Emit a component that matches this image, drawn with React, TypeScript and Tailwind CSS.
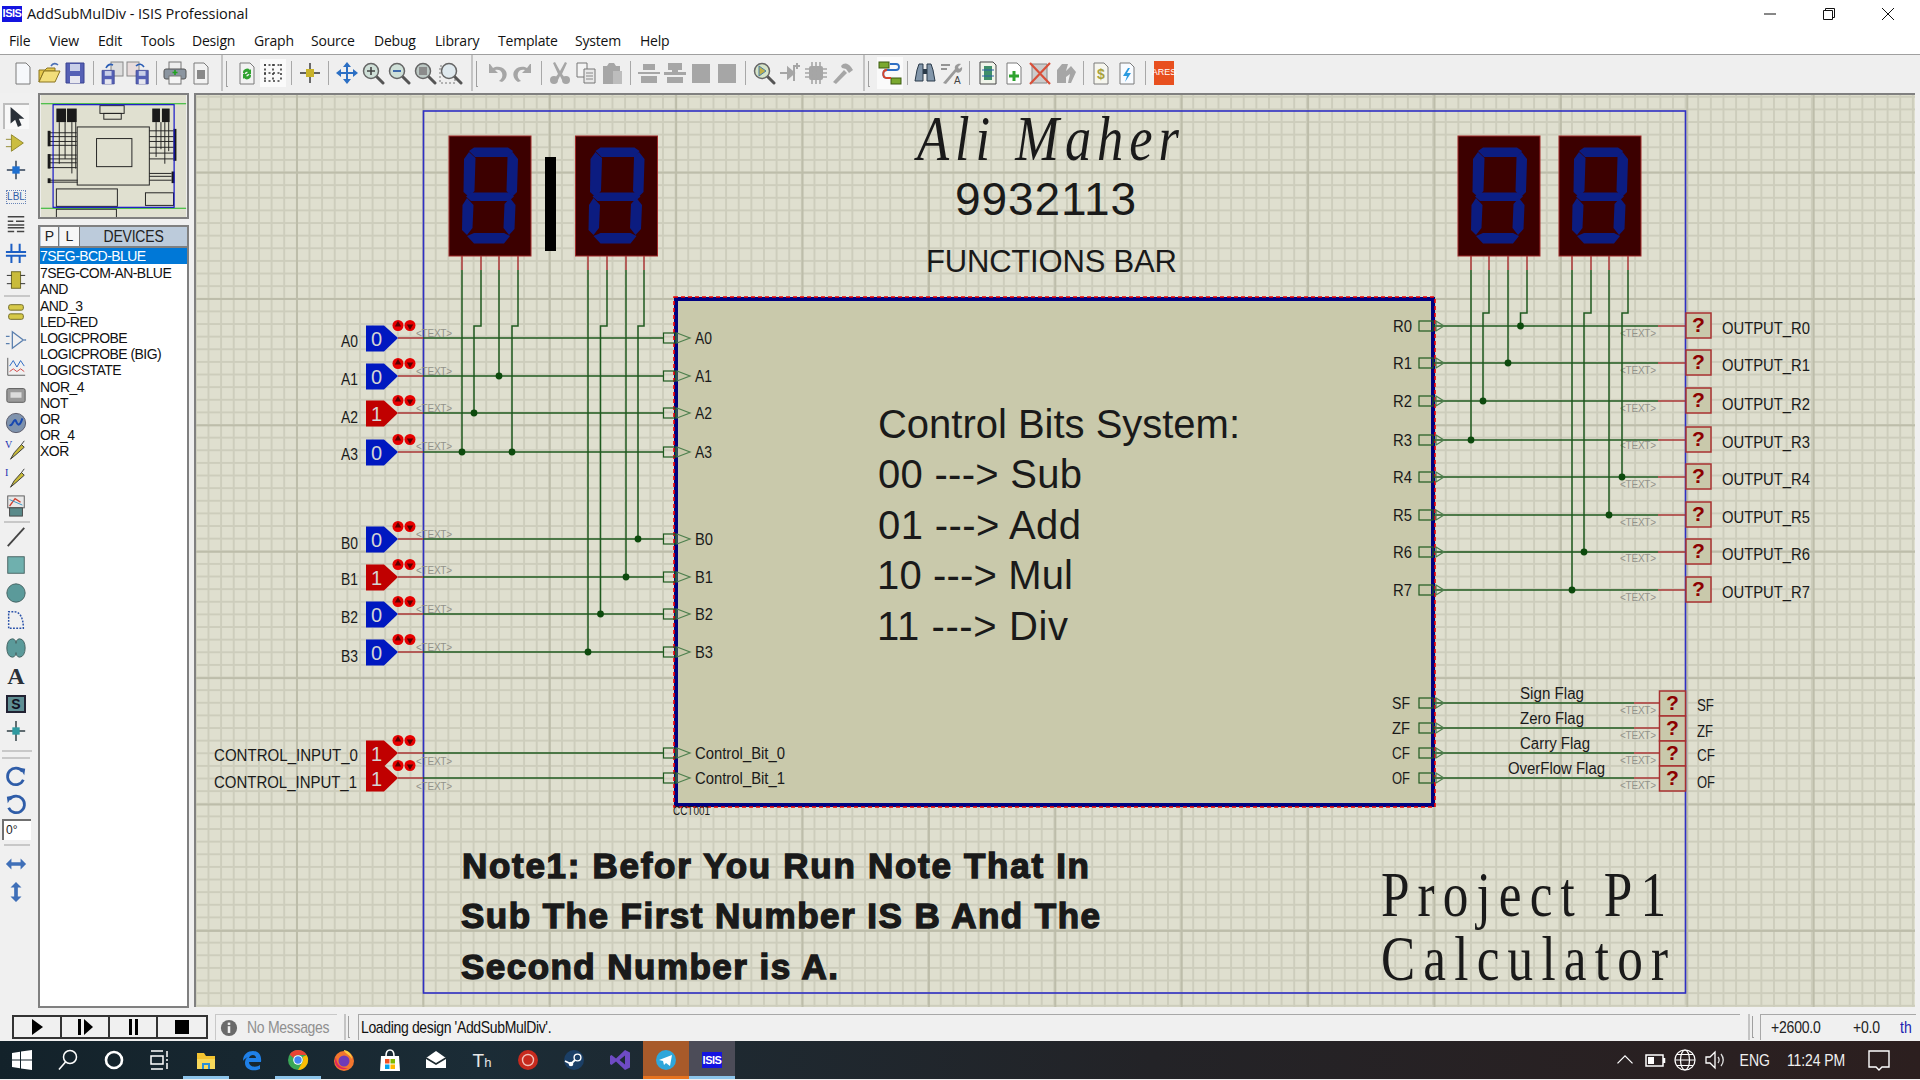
import React from 'react';

const sans = "'Liberation Sans', Arial, sans-serif";
const serif = "'Liberation Serif', 'Times New Roman', serif";
const WIRE = '#1f5a1f';
const STUB = '#a83434';

// ---------- schematic helpers ----------
type TP = { x: number; y: number; w?: number; s?: number; c?: string; f?: string; b?: boolean; i?: boolean; fit?: boolean; sw?: number; sx?: number; children: React.ReactNode };
const T = ({ x, y, w, s = 14, c = '#1a1a1a', f = sans, b, i, fit, sw, sx, children }: TP) => {
  const txt = (
    <text
      x={sx ? 0 : x} y={sx ? 0 : y} fontSize={s} fill={c} fontFamily={f}
      fontWeight={b ? 700 : 400} fontStyle={i ? 'italic' : 'normal'}
      textLength={w && sx ? w / sx : w} lengthAdjust={fit ? 'spacingAndGlyphs' : 'spacing'}
      stroke={sw ? c : undefined} strokeWidth={sw}
    >
      {children}
    </text>
  );
  // narrow glyphs, wide spacing: the big titles in the drawing are set like that
  return sx ? <g transform={`translate(${x} ${y}) scale(${sx} 1)`}>{txt}</g> : txt;
};

const Wire = ({ p, c = WIRE, w = 1.5 }: { p: string; c?: string; w?: number }) => (
  <polyline points={p} fill="none" stroke={c} strokeWidth={w} />
);
const Dot = ({ x, y }: { x: number; y: number }) => <circle cx={x} cy={y} r={3.4} fill="#0d4a0d" />;
const Tag = ({ x, y }: { x: number; y: number }) => (
  <T x={x} y={y + 3.5} w={36} s={10} c="#92928a">{'<TEXT>'}</T>
);

const Display = ({ x }: { x: number }) => (
  <g transform={`translate(${x} 136)`}>
    <rect x={0} y={0} width={82} height={120} fill="#3c0000" stroke="#a02828" strokeWidth={1} />
    <g fill="#0c1c80">
      <polygon points="20,15 25,11.500 59,11.500 64,15 60,21 26,21" />
      <polygon points="20,16 26.500,22 25.500,55 20,61 14.500,56 15,23" />
      <polygon points="63.500,16 69,23 68,56 63,61 57.500,55 58.500,21" />
      <polygon points="17,60.500 22,56.500 60,56.500 65,60.500 60,65 22,65" />
      <polygon points="18,62 24.500,69 23.500,92 18,99 13,94 13.500,69" />
      <polygon points="61,62 66.500,69 65.500,93 60,99 54.500,92 55.500,68" />
      <polygon points="18,100 25,97 55,97 61,100 55,107.500 25,107.500" />
    </g>
  </g>
);

const PinStub = ({ x }: { x: number }) => <Wire p={`${x},256 ${x},270`} c={STUB} />;

const State = ({ y, v }: { y: number; v: 0 | 1 }) => (
  <g>
    <polygon
      points={`366,${y - 12.5} 384,${y - 12.5} 398,${y} 384,${y + 13.5} 366,${y + 13.5}`}
      fill={v ? '#c00000' : '#0018c0'}
    />
    <text x={371} y={y + 7.5} fontSize={20} fill="#d4d4d4" fontFamily={sans}>{v}</text>
    {[398, 410].map((cx, i) => (
      <g key={cx}>
        <circle cx={cx} cy={y - 12.5} r={5.5} fill="#e60000" />
        <polygon
          points={i === 0 ? `${cx},${y - 17} ${cx + 3.2},${y - 11.5} ${cx - 3.2},${y - 11.5}` : `${cx},${y - 8} ${cx + 3.2},${y - 13.5} ${cx - 3.2},${y - 13.5}`}
          fill="#5a0000"
        />
      </g>
    ))}
    <Wire p={`398,${y} 423,${y}`} c={STUB} />
  </g>
);

const InLeft = ({ y, l, w }: { y: number; l: string; w: number }) => (
  <g>
    <Wire p={`423,${y} 664,${y}`} />
    <rect x={663.5} y={y - 5} width={12} height={10} fill="none" stroke={WIRE} strokeWidth={1.2} />
    <polygon points={`677,${y - 5} 690,${y} 677,${y + 5}`} fill="none" stroke="#4d7f4d" strokeWidth={1.2} />
    <T x={695} y={y + 5.5} w={w} s={16} fit>{l}</T>
  </g>
);

const OutRight = ({ y, l, lx = 1393, stop = 1685, red = 1658 }: { y: number; l: string; lx?: number; stop?: number; red?: number }) => (
  <g>
    <Wire p={`1434,${y} ${red},${y}`} />
    <Wire p={`${red},${y} ${stop},${y}`} c={STUB} />
    <rect x={1419} y={y - 5} width={14} height={10} fill="none" stroke={WIRE} strokeWidth={1.2} />
    <polygon points={`1436,${y - 5} 1444,${y} 1436,${y + 5}`} fill="none" stroke="#4d7f4d" strokeWidth={1.2} />
    <T x={lx} y={y + 5.5} w={lx === 1393 ? 19 : 18} s={16} fit>{l}</T>
  </g>
);

const Probe = ({ x, y, w = 25, h = 25 }: { x: number; y: number; w?: number; h?: number }) => (
  <g>
    <rect x={x} y={y} width={w} height={h} fill="#c9c9ab" stroke="#a83030" strokeWidth={1.5} />
    <text x={x + w / 2} y={y + 19} textAnchor="middle" fontSize={21} fontWeight={700} fill="#8c0000" fontFamily={sans}>?</text>
  </g>
);

const rows = [
  { n: 'R0', y: 326, ty: 333, ly: 329 },
  { n: 'R1', y: 363, ty: 370, ly: 366 },
  { n: 'R2', y: 401, ty: 408, ly: 405 },
  { n: 'R3', y: 440, ty: 445, ly: 443 },
  { n: 'R4', y: 477, ty: 484, ly: 480 },
  { n: 'R5', y: 515, ty: 522, ly: 518 },
  { n: 'R6', y: 552, ty: 558, ly: 555 },
  { n: 'R7', y: 590, ty: 597, ly: 593 },
];
const flags = [
  { n: 'SF', y: 703, t: 'Sign Flag', tx: 1520, tw: 64, ly: 706, w: 17 },
  { n: 'ZF', y: 728, t: 'Zero Flag', tx: 1520, tw: 64, ly: 732, w: 16 },
  { n: 'CF', y: 753, t: 'Carry Flag', tx: 1520, tw: 70, ly: 756, w: 18 },
  { n: 'OF', y: 778, t: 'OverFlow Flag', tx: 1508, tw: 97, ly: 783, w: 18 },
];
const aIn = [
  { l: 'A0', y: 338, v: 0, ly: 341, ty: 333, lw: 17 },
  { l: 'A1', y: 376, v: 0, ly: 379, ty: 371, lw: 17 },
  { l: 'A2', y: 413, v: 1, ly: 417, ty: 408, lw: 17 },
  { l: 'A3', y: 452, v: 0, ly: 454, ty: 446, lw: 17 },
  { l: 'B0', y: 539, v: 0, ly: 543, ty: 534, lw: 18 },
  { l: 'B1', y: 577, v: 1, ly: 579, ty: 570, lw: 18 },
  { l: 'B2', y: 614, v: 0, ly: 617, ty: 609, lw: 18 },
  { l: 'B3', y: 652, v: 0, ly: 656, ty: 647, lw: 18 },
] as const;

const Schematic = () => (
  <svg viewBox="196 95 1719 912" className="block h-[912px] w-[1719px]">
    <rect x={423.5} y={111} width={1262} height={882} fill="none" stroke="#2f2fc4" strokeWidth={1.6} />

    <Display x={449} />
    <Display x={575.5} />
    <rect x={545} y={157} width={11} height={94} fill="#000" />
    <Display x={1458} />
    <Display x={1559} />

    <T x={917} y={160} w={262} s={64} f={serif} i sx={0.82}>Ali Maher</T>
    <T x={955} y={215} w={181} s={46}>9932113</T>
    <T x={926} y={272} w={251} s={31}>FUNCTIONS BAR</T>

    <rect x={676} y={299} width={757} height={506} fill="#c9c9ab" stroke="#000080" strokeWidth={4} />
    <rect x={674} y={297} width={761} height={510} fill="none" stroke="#f00000" strokeWidth={1.6} strokeDasharray="4 3" />

    <T x={878} y={438} w={362} s={40}>Control Bits System:</T>
    <T x={878} y={488} w={204} s={40}>00 ---&gt; Sub</T>
    <T x={878} y={539} w={203} s={40}>01 ---&gt; Add</T>
    <T x={877} y={589} w={196} s={40}>10 ---&gt; Mul</T>
    <T x={877} y={640} w={191} s={40}>11 ---&gt; Div</T>

    {[462, 481, 499, 518, 588, 607, 626, 644, 1471, 1489, 1508, 1527, 1572, 1591, 1609, 1628].map((x) => (
      <PinStub key={x} x={x} />
    ))}

    {/* input pins */}
    {aIn.map((a) => (
      <g key={a.l}>
        <InLeft y={a.y} l={a.l} w={a.lw} />
        <State y={a.y} v={a.v} />
        <Tag x={416} y={a.ty} />
        <T x={341} y={a.ly + 5.5} w={17} s={16} fit>{a.l}</T>
      </g>
    ))}
    <InLeft y={753} l="Control_Bit_0" w={90} />
    <InLeft y={778} l="Control_Bit_1" w={90} />
    <State y={778} v={1} />
    <State y={753} v={1} />
    <Tag x={416} y={761} />
    <Tag x={416} y={786} />
    <T x={214} y={761} w={144} s={16} fit>CONTROL_INPUT_0</T>
    <T x={214} y={788} w={143} s={16} fit>CONTROL_INPUT_1</T>

    {/* display wiring, left side */}
    <Wire p="462,270 462,452" />
    <Wire p="481,270 481,326 474,326 474,413" />
    <Wire p="499,270 499,376" />
    <Wire p="518,270 518,326 512,326 512,452" />
    <Wire p="588,270 588,652" />
    <Wire p="607,270 607,326 600.5,326 600.5,614" />
    <Wire p="626,270 626,577" />
    <Wire p="644,270 644,326 638,326 638,539" />
    <Dot x={499} y={376} />
    <Dot x={474} y={413} />
    <Dot x={462} y={452} />
    <Dot x={512} y={452} />
    <Dot x={638} y={539} />
    <Dot x={626} y={577} />
    <Dot x={600.5} y={614} />
    <Dot x={588} y={652} />

    {/* outputs */}
    {rows.map((r) => (
      <g key={r.n}>
        <OutRight y={r.y} l={r.n} />
        <Tag x={1620} y={r.ty} />
        <Probe x={1686} y={r.y - 13} />
        <T x={1722} y={r.ly + 5} w={88} s={16} fit>{`OUTPUT_${r.n}`}</T>
      </g>
    ))}
    <Wire p="1471,270 1471,440" />
    <Wire p="1489,270 1489,313 1483,313 1483,401" />
    <Wire p="1508,270 1508,363" />
    <Wire p="1527,270 1527,313 1520.5,313 1520.5,326" />
    <Wire p="1572,270 1572,590" />
    <Wire p="1591,270 1591,313 1584,313 1584,552" />
    <Wire p="1609,270 1609,515" />
    <Wire p="1628,270 1628,313 1622,313 1622,477" />
    <Dot x={1520.5} y={326} />
    <Dot x={1508} y={363} />
    <Dot x={1483} y={401} />
    <Dot x={1471} y={440} />
    <Dot x={1622} y={477} />
    <Dot x={1609} y={515} />
    <Dot x={1584} y={552} />
    <Dot x={1572} y={590} />

    {flags.map((g, i) => (
      <g key={g.n}>
        <OutRight y={g.y} l={g.n} lx={1392} stop={1659} red={1634} />
        <T x={g.tx} y={g.y - 4} w={g.tw} s={16} fit>{g.t}</T>
        <Tag x={1620} y={g.y + 7} />
        <Probe x={1659.5} y={691 + i * 25} w={26} h={25} />
        <T x={1697} y={g.ly + 5} w={g.w} s={16} fit>{g.n}</T>
      </g>
    ))}

    <T x={673} y={815} w={37} s={12} fit>CCT001</T>

    <T x={462} y={878} w={627} s={35} b sw={1.4}>Note1: Befor You Run Note That In</T>
    <T x={461} y={928} w={639} s={35} b sw={1.4}>Sub The First Number IS B And The</T>
    <T x={461} y={979} w={377} s={35} b sw={1.4}>Second Number is A.</T>

    <T x={1381} y={916} w={285} s={64} f={serif} sx={0.8}>Project P1</T>
    <T x={1381} y={980} w={287} s={64} f={serif} sx={0.8}>Calculator</T>
  </svg>
);

const Overview = () => (
  <svg viewBox="38 94 150 126" className="block h-full w-full">
    <rect x={38} y={94} width={150} height={126} fill="#e0e0d0" />
    <path d="M38 103H188M38 211H188" stroke="#22b522" strokeWidth={1.2} />
    <g fill="none" stroke="#222" strokeWidth={1}>
      <rect x={75.500} y={127} width={74.500} height={60} />
      <rect x={95.500} y={139} width={36.500} height={29} />
      <rect x={99} y={105} width={25} height={8} />
      <rect x={103} y={113} width={18} height={6} />
      <rect x={54} y={191} width={63} height={18} />
      <rect x={146} y={195} width={29} height={13} />
      <rect x={54} y={212} width={62} height={10} />
      <path d="M57 122V165M63 122V160M70 122V175M74 122V170M157 122V158M162 122V150M166 122V165M170 122V152" />
      <path d="M46 133H75M46 137H75M46 142H75M46 146H75M46 156H75M46 160H75M46 164H75M46 169H75M46 182H76M46 184H76M150 131H175M150 137H175M150 142H175M150 148H175M150 154H175M150 160H175M150 175H173M150 178H173M150 182H173" />
    </g>
    <g fill="#1a1a1a">
      <rect x={54} y={108} width={10} height={14} />
      <rect x={65} y={108} width={10} height={14} />
      <rect x={153} y={108} width={8} height={14} />
      <rect x={163} y={108} width={8} height={14} />
      <rect x={45} y={131} width={3} height={16} />
      <rect x={45} y={155} width={3} height={15} />
      <rect x={45} y={180} width={3} height={5} />
      <rect x={175} y={129} width={3} height={33} />
      <rect x={173} y={173} width={3} height={12} />
    </g>
    <rect x={50.600} y={104} width={125} height={106} fill="none" stroke="#1010c8" strokeWidth={1.2} />
  </svg>
);

// ---------- toolbar icons ----------
const I = ({ children, box = '0 0 24 24' }: { children: React.ReactNode; box?: string }) => (
  <svg viewBox={box} className="h-6 w-6">{children}</svg>
);
const G = '#a6a6a6';
const Doc = ({ f = '#fff' }: { f?: string }) => (
  <path d="M5 2h10l4 4v17H5z" fill={f} stroke="#7a7a7a" strokeWidth={1} />
);
const Floppy = ({ x = 0, y = 0, s = 1 }: { x?: number; y?: number; s?: number }) => (
  <g transform={`translate(${x} ${y}) scale(${s})`}>
    <path d="M3 2h18v20H3z" fill="#5560b5" stroke="#3a4390" strokeWidth={1} />
    <rect x={7} y={3} width={10} height={7} fill="#c9cfe8" />
    <rect x={7} y={15} width={10} height={7} fill="#e7e7ef" />
  </g>
);
const Lens = ({ c = '#9cc8b5', children }: { c?: string; children?: React.ReactNode }) => (
  <g>
    <path d="M15 15l7 7" stroke="#555" strokeWidth={3} strokeLinecap="round" />
    <circle cx={10} cy={10} r={7.5} fill={c} stroke="#666" strokeWidth={1.5} />
    {children}
  </g>
);
const blockIcon = (a: string) => (
  <I><path d={a} fill={G} /></I>
);

const tb: (React.ReactNode | 'sep' | 'sep9' | 'gap' | 'gap2')[] = [
  <I key="new"><Doc f="#f6f8fb" /></I>,
  <I key="open"><path d="M2 9h6l2-2h8v3H7L2 21z" fill="#e6c94b" stroke="#8a7420" /><path d="M7 10h16l-5 11H2z" fill="#f2de7a" stroke="#8a7420" /><path d="M14 5c2-3 5-3 7-1" fill="none" stroke="#4a6fb5" strokeWidth={1.6} /></I>,
  <I key="save"><Floppy /></I>,
  'sep',
  <I key="imp"><rect x={11} y={1} width={12} height={14} fill="#ddd" stroke="#888" /><Floppy x={0} y={8} s={0.68} /><path d="M6 7c2-4 5-4 7-3" fill="none" stroke="#2a5db5" strokeWidth={1.6} /></I>,
  <I key="exp"><rect x={1} y={1} width={12} height={14} fill="#e8dcdc" stroke="#888" /><Floppy x={8} y={8} s={0.68} /><path d="M10 5c3-3 6-2 8 1" fill="none" stroke="#2a5db5" strokeWidth={1.6} /></I>,
  'sep',
  <I key="print"><rect x={6} y={1} width={12} height={8} fill="#eee" stroke="#777" /><rect x={1} y={8} width={22} height={10} rx={2} fill="#8b95a0" stroke="#555" /><rect x={6} y={15} width={12} height={8} fill="#f4f4f4" stroke="#777" /><path d="M12 9v5M9.5 11.5h5" stroke="#1fa41f" strokeWidth={1.6} /></I>,
  <I key="page"><Doc f="#f2f2f2" /><rect x={8} y={9} width={8} height={9} fill="#888" /></I>,
  'gap',
  <I key="refresh"><Doc f="#f2f2f2" /><path d="M8 12a4 4 0 0 1 7-3l1-1v5h-5l2-2a2 2 0 0 0-3 2zM16 14a4 4 0 0 1-7 3l-1 1v-5h5l-2 2a2 2 0 0 0 3-2z" fill="#2fa32f" /></I>,
  <div key="grid" className="flex h-[28px] w-[26px] items-center justify-center bg-[#fafafa]"><I><path d="M3 4h18M3 12h18M3 20h18M4 3v18M12 3v18M20 3v18" stroke="#3a3a3a" strokeWidth={1.6} strokeDasharray="2 2.5" /></I></div>,
  'sep',
  <I key="origin"><path d="M12 2v20M2 12h20" stroke="#333" strokeWidth={1.4} /><rect x={8} y={8} width={8} height={8} fill="#c9b32a" /></I>,
  'sep',
  <I key="pan"><path d="M12 1l4 5h-3v5h5V8l5 4-5 4v-3h-5v5h3l-4 5-4-5h3v-5H6v3l-5-4 5-4v3h5V6H8z" fill="#2b6fc4" /></I>,
  <I key="zi"><Lens c="#cfe0d8"><path d="M10 6v8M6 10h8" stroke="#444" strokeWidth={1.6} /></Lens></I>,
  <I key="zo"><Lens c="#cfe0d8"><path d="M6 10h8" stroke="#2f5da8" strokeWidth={1.8} /></Lens></I>,
  <I key="za"><Lens c="#bcc8c4"><rect x={6} y={6} width={8} height={8} fill="#8b8b8b" /></Lens></I>,
  <I key="zr"><rect x={1} y={5} width={15} height={17} fill="none" stroke="#777" strokeDasharray="2 2" /><Lens c="#dfe9ee" /></I>,
  'gap',
  <I key="undo"><path d="M4 3v9h9l-3-3c3-1 6 0 7 3s0 6-3 8l3 1c5-3 6-9 3-12-3-4-9-4-12-2L5 3z" fill={G} /></I>,
  <I key="redo"><path d="M20 3v9h-9l3-3c-3-1-6 0-7 3s0 6 3 8l-3 1c-5-3-6-9-3-12 3-4 9-4 12-2l3-4z" fill={G} /></I>,
  'sep',
  <I key="cut"><path d="M7 1l5 9 5-9 2 1-5 11 3 4-3 2-2-4-2 4-3-2 3-4L5 2z" fill={G} /><circle cx={6} cy={19} r={4} fill={G} /><circle cx={18} cy={19} r={4} fill={G} /></I>,
  <I key="copy"><path d="M3 2h10v14H3z" fill="#f4f4f4" stroke="#777" /><path d="M10 8h11v14H10z" fill="#e8e8e8" stroke="#777" /><path d="M12 12h7M12 15h7M12 18h7" stroke="#888" /></I>,
  <I key="paste"><path d="M3 5h4l2-3h5l2 3h4v18H3z" fill={G} /><path d="M13 10h9v13h-9z" fill="#bdbdbd" /></I>,
  'sep',
  blockIcon('M6 3h12v6H6zM1 11h22v2H1zM4 15h16v7H4z'),
  blockIcon('M5 2h14v7h-4v2h8v3H1v-3h8V9H5zM4 16h16v6H4z'),
  blockIcon('M3 3h18v19H3z'),
  blockIcon('M3 3h18v19H3z'),
  'sep',
  <I key="pick"><Lens c="#d6e4c8"><path d="M7 5l7 5-7 5z" fill="#c2b24a" stroke="#4a7fa8" /></Lens></I>,
  <I key="mk1"><path d="M2 12h8M16 4v16M10 7l6 5-6 5z" stroke={G} strokeWidth={2} fill={G} /><path d="M19 2v6M16 5h6" stroke={G} strokeWidth={2} /></I>,
  <I key="mk2"><rect x={5} y={5} width={14} height={14} rx={2} fill={G} /><path d="M8 1v22M12 1v22M16 1v22M1 8h22M1 12h22M1 16h22" stroke={G} strokeWidth={1.6} /></I>,
  <I key="mk3"><path d="M3 21L14 9l3 3L6 23z" fill={G} /><path d="M11 5c3-4 7-3 10 1l2 3-4 3-3-4-4-1z" fill={G} /></I>,
  'gap2',
  <div key="net" className="flex h-[32px] w-[26px] items-center justify-center bg-[#fafafa]"><I><rect x={1} y={1} width={10} height={6} fill="#7aa82f" stroke="#3d5a12" /><rect x={13} y={17} width={10} height={6} fill="#7aa82f" stroke="#3d5a12" /><path d="M12 3h6c4 0 4 6 0 6h-9c-5 0-5 8 0 8h4" fill="none" stroke="#2e6fc4" strokeWidth={1.8} /><path d="M9 9c-5 0-5 8 0 8h4" fill="none" stroke="#d8442a" strokeWidth={1.8} /></I></div>,
  'sep9',
  <I key="bin"><path d="M2 20l2-11 2-6h4v17zM22 20l-2-11-2-6h-4v17z" fill="#8296aa" stroke="#2a3a4a" /><rect x={10} y={8} width={4} height={5} fill="#2a3a4a" /></I>,
  <I key="wr"><path d="M2 4h9M2 8h6" stroke="#777" strokeWidth={1.5} /><path d="M4 22L16 8c-1-3 2-6 6-5l-3 3 1 2 3-2c1 4-3 7-6 5L7 23z" fill="#9a9a9a" /><text x={15} y={23} fontSize={10} fill="#444" fontFamily={sans}>A</text></I>,
  'sep',
  <I key="bom"><path d="M4 1h13l3 3v19H4z" fill="#f0f4ea" stroke="#444" /><rect x={8} y={5} width={8} height={14} fill="#3f8f6a" /><path d="M6 9h12M6 15h12" stroke="#2c5fa8" /></I>,
  <I key="add"><Doc /><path d="M12 10v10M7 15h10" stroke="#2fa32f" strokeWidth={3} /></I>,
  <I key="del"><path d="M4 3h15v19H4z" fill="#ccc" stroke="#888" /><path d="M2 2l20 21M22 2L2 23" stroke="#d8503a" strokeWidth={2.2} /></I>,
  <I key="mk4"><path d="M3 22V9l5-6h6l-2 7 5-5 5 6-5 11h-3l2-9-4 3v6z" fill={G} /></I>,
  'sep9',
  <I key="dol"><Doc f="#f6f6ee" /><text x={8} y={18} fontSize={14} fontWeight={700} fill="#a8a23c" fontFamily={sans}>$</text></I>,
  <I key="bolt"><Doc f="#f8fbff" /><path d="M13 7l-5 8h4l-2 6 6-9h-4l3-5z" fill="#2a9adf" /></I>,
  'sep',
  <div key="ares" className="flex h-[24px] w-[20px] items-center justify-center bg-[#e8501f] font-['Liberation_Sans',sans-serif] text-[9px] leading-none text-white">ARES</div>,
];

const Toolbar = () => (
  <div className="flex h-[39px] items-center border-t border-t-[#a0a0a0] bg-[#efefef] pb-[3px] pl-[10px]">
    {tb.map((it, i) => {
      if (it === 'sep') return <div key={i} className="flex h-[24px] w-[11px] justify-center"><div className="h-full w-px bg-[#a8a8a8]" /></div>;
      if (it === 'sep9') return <div key={i} className="flex h-[24px] w-[9px] justify-center"><div className="h-full w-px bg-[#a8a8a8]" /></div>;
      if (it === 'gap') return <div key={i} className="flex h-[36px] w-[20px] justify-center gap-[3px]"><div className="h-full w-[2px] bg-[#c4c4c4]" /><div className="mt-[6px] h-[26px] w-[2px] border-l border-b border-[#a0a0a0]" /></div>;
      if (it === 'gap2') return <div key={i} className="flex h-[36px] w-[22px] justify-center gap-[3px]"><div className="h-full w-[2px] bg-[#c4c4c4]" /><div className="mt-[6px] h-[26px] w-[2px] border-l border-b border-[#a0a0a0]" /></div>;
      return <div key={i} className="flex w-[26px] items-center justify-center">{it}</div>;
    })}
  </div>
);

// ---------- left strip ----------
const Tool = ({ children, h = 'h-[27.7px]', on }: { children: React.ReactNode; h?: string; on?: boolean }) => (
  <div className={`flex w-full items-center justify-center ${h}`}>
    <div className={`flex h-[26px] w-[26px] items-center justify-center ${on ? 'border-t-2 border-l-2 border-t-[#bdbdbd] border-l-[#bdbdbd] bg-[#f8f8f8]' : ''}`}>{children}</div>
  </div>
);
const S = ({ children }: { children: React.ReactNode }) => <svg viewBox="0 0 24 24" className="h-[22px] w-[22px]">{children}</svg>;
const Div2 = ({ h = 'h-[4px]' }: { h?: string }) => (
  <div className={`flex items-center ${h}`}><div className="ml-[4px] h-[2px] w-[26px] bg-[#c8c8c8]" /></div>
);
const Probe2 = ({ l }: { l: string }) => (
  <S><text x={0} y={10} fontSize={11} fill="#2030b0" fontFamily={serif}>{l}</text><path d="M6 22l4-7 8-9 3 3-9 8z" fill="#c9bb3a" stroke="#333" /><path d="M18 6l3-4" stroke="#333" /></S>
);

const LeftStrip = () => (
  <div className="flex w-[32px] shrink-0 flex-col pt-[9px]">
    <Tool on><S><path d="M5 1v18l5-4 3 8 4-2-3-7h6z" fill="#2a3038" /></S></Tool>
    <Tool h="h-[26.5px]"><S><path d="M7 3v18l13-9zM1 8h6M1 16h6" fill="#cbbd3f" stroke="#8e8528" /></S></Tool>
    <Tool h="h-[27.5px]"><S><path d="M12 2v20M2 12h20" stroke="#2f3f55" strokeWidth={1.6} /><rect x={8} y={8} width={8} height={8} fill="#1e6fd0" /></S></Tool>
    <Tool h="h-[27.5px]"><div className="border border-dotted border-[#6a86b8] font-['Liberation_Sans',sans-serif] text-[10px] leading-[12px] text-[#2f5da8]">LBL</div></Tool>
    <Tool h="h-[27.5px]"><S><path d="M3 3h18M3 8h6M12 8h9M3 12h18M3 15h18M3 19h7M13 19h8" stroke="#444" strokeWidth={1.6} /></S></Tool>
    <Tool><S><path d="M7 2v9M16 2v9M1 11h22M1 15h22M7 15v8M16 15v8" stroke="#1d5fc4" strokeWidth={2.2} /></S></Tool>
    <Tool><S><rect x={7} y={3} width={10} height={18} fill="#c9bb3a" stroke="#6a6420" /><path d="M2 7h5M2 16h5M17 7h5M17 16h5" stroke="#222" /></S></Tool>
    <Div2 h="h-[4px]" />
    <Tool><S><rect x={4} y={4} width={16} height={6} rx={2} fill="#d6c94a" stroke="#6a6420" /><rect x={4} y={14} width={16} height={6} rx={2} fill="#d6c94a" stroke="#6a6420" /></S></Tool>
    <Tool><S><path d="M8 3v18l12-9zM1 8h4M1 16h4M21 12h2" fill="none" stroke="#5a7fae" strokeWidth={1.4} /></S></Tool>
    <Tool><S><path d="M3 2v19h19" fill="none" stroke="#555" /><path d="M5 11l4-6 4 7 4-7 4 6" fill="none" stroke="#2060c0" /><path d="M5 17l4-3 4 3 4-3 4 3" fill="none" stroke="#d04040" /></S></Tool>
    <Tool><S><rect x={2} y={5} width={20} height={15} rx={2} fill="#9a9a9a" stroke="#555" /><rect x={6} y={9} width={12} height={6} fill="#dcdcdc" /></S></Tool>
    <Tool><S><circle cx={12} cy={12} r={10.5} fill="#7f93ad" stroke="#556" /><path d="M5 14c3 3 5-9 7-4s4 6 7-3" fill="none" stroke="#1848b0" strokeWidth={2.2} /></S></Tool>
    <Tool><Probe2 l="V" /></Tool>
    <Tool><Probe2 l="I" /></Tool>
    <Tool><S><rect x={3} y={1} width={18} height={13} fill="#e8e8e8" stroke="#555" /><path d="M5 12l6-8 6 4" fill="none" stroke="#d04030" strokeWidth={1.4} /><path d="M5 5l14 6" stroke="#3090c0" /><rect x={5} y={14} width={14} height={9} fill="#5a8a8a" stroke="#444" /></S></Tool>
    <Div2 />
    <Tool><S><path d="M3 22L21 2" stroke="#444" strokeWidth={2} /></S></Tool>
    <Tool><S><rect x={3} y={3} width={18} height={18} fill="#6fb0ae" stroke="#44605f" /></S></Tool>
    <Tool><S><circle cx={12} cy={12} r={10} fill="#5b9a9a" stroke="#44605f" /></S></Tool>
    <Tool><S><path d="M4 21V3h6c6 0 10 6 10 18z" fill="none" stroke="#2850a8" strokeWidth={1.6} strokeDasharray="2 1.5" /></S></Tool>
    <Tool><S><path d="M8 2c-8 0-8 20 0 20 3 0 4-3 4-5 0 2 1 5 4 5 8 0 8-20 0-20-3 0-4 3-4 5 0-2-1-5-4-5z" fill="#5b9a9a" stroke="#44605f" /></S></Tool>
    <Tool><span className="font-['Liberation_Serif',serif] text-[24px] leading-none font-bold text-[#2a3038]">A</span></Tool>
    <Tool><div className="flex h-[18px] w-[20px] items-center justify-center border-2 border-[#223] bg-[#5f8e93] font-['Liberation_Sans',sans-serif] text-[14px] leading-none font-bold text-[#112]">S</div></Tool>
    <Tool><S><path d="M12 1v22M2 12h20" stroke="#2f3f45" strokeWidth={1.6} /><rect x={8} y={8} width={8} height={8} fill="#2f9aa0" /></S></Tool>
    <div className="flex h-[18px] flex-col justify-center gap-[5px]"><div className="ml-[2px] h-[2px] w-[30px] bg-[#c8c8c8]" /><div className="ml-[2px] h-[2px] w-[28px] bg-[#c8c8c8]" /></div>
    <Tool><S><path d="M19 6A9 9 0 1 0 20 15" fill="none" stroke="#2f5da8" strokeWidth={3} /><path d="M16 2l6 1-1 7z" fill="#2f5da8" /></S></Tool>
    <Tool><S><path d="M5 6A9 9 0 1 1 4 15" fill="none" stroke="#2f5da8" strokeWidth={3} /><path d="M8 2L2 3l1 7z" fill="#2f5da8" /></S></Tool>
    <div className="flex h-[22px] items-center pl-[2px]"><div className="h-[21px] w-[29px] border-t-2 border-l-2 border-t-[#707070] border-l-[#707070] bg-white pl-[2px] font-['Liberation_Sans',sans-serif] text-[12px] leading-[18px] text-[#222]">0°</div></div>
    <div className="flex h-[10px] items-center"><div className="ml-[4px] h-[2px] w-[26px] bg-[#c8c8c8]" /></div>
    <Tool><S><path d="M1 12l6-6v4h10V6l6 6-6 6v-4H7v4z" fill="#3f6fb8" /></S></Tool>
    <Tool><S><path d="M12 1l6 6h-4v10h4l-6 6-6-6h4V7H6z" fill="#3f6fb8" /></S></Tool>
  </div>
);

const devices = ['7SEG-BCD-BLUE', '7SEG-COM-AN-BLUE', 'AND', 'AND_3', 'LED-RED', 'LOGICPROBE', 'LOGICPROBE (BIG)', 'LOGICSTATE', 'NOR_4', 'NOT', 'OR', 'OR_4', 'XOR'];

const DevicePanel = () => (
  <div className="ml-[6px] flex w-[151px] shrink-0 flex-col font-['Liberation_Sans',sans-serif]">
    <div className="h-[126px] border-2 border-[#808080]"><Overview /></div>
    <div className="mt-[6px] flex h-[21px] items-stretch border-x-2 border-t-2 border-[#808080] bg-[#bccbdb] text-[14px] leading-[18px] text-[#222]">
      <div className="ml-px w-[18px] border-r border-[#777] bg-[#f6f6f6] text-center">P</div>
      <div className="ml-px w-[20px] border-r border-[#777] bg-[#f6f6f6] text-center">L</div>
      <div className="flex-1 scale-y-[1.12] text-center tracking-[-0.2px]">DEVICES</div>
    </div>
    <div className="flex-1 border-2 border-[#808080] bg-white">
      {devices.map((d, i) => (
        <div key={d} className={`h-[16.2px] text-[14px] leading-[16px] ${i === 0 ? 'bg-[#0078d7] text-white' : 'text-[#111]'}`}>
          <div className="scale-y-[1.1] tracking-[-0.55px]">{d}</div>
        </div>
      ))}
    </div>
  </div>
);

// ---------- status bar ----------
const Sim = ({ children, last }: { children: React.ReactNode; last?: boolean }) => (
  <div className={`flex h-full w-[48.5px] items-center justify-center border-[#f8f8f8] bg-[#f0f0f0] ${last ? '' : 'border-r-2 border-r-[#333]'}`}>{children}</div>
);

const Sep = () => (
  <div className="flex h-[26px] w-[7px] shrink-0 gap-[2px]"><div className="h-full w-[2px] bg-[#c4c4c4]" /><div className="mt-[2px] h-[22px] w-[2px] border-l border-b border-[#a0a0a0]" /></div>
);

const StatusBar = () => (
  <div className="flex h-[33px] items-center bg-[#f0f0f0] pt-[5px] font-['Liberation_Sans',sans-serif] text-[14px]">
    <div className="ml-[12px] flex h-[24px] w-[196px] border-2 border-[#333]">
      <Sim><div className="h-0 w-0 border-y-[8px] border-l-[11px] border-y-transparent border-l-black" /></Sim>
      <Sim><div className="mr-[3px] h-[16px] w-[3px] bg-black" /><div className="h-0 w-0 border-y-[8px] border-l-[9px] border-y-transparent border-l-black" /></Sim>
      <Sim><div className="mr-[3px] h-[16px] w-[3px] bg-black" /><div className="h-[16px] w-[3px] bg-black" /></Sim>
      <Sim last><div className="h-[14px] w-[14px] bg-black" /></Sim>
    </div>
    <div className="ml-[7px] flex h-[26px] w-[122px] items-center border-t border-t-[#c8c8c8] border-l border-l-[#c8c8c8] pl-[4px] text-[#8f8f8f]">
      <svg viewBox="0 0 20 20" className="mr-[9px] h-[18px] w-[18px] shrink-0"><circle cx={10} cy={10} r={9} fill="#6a6a6a" /><rect x={8.6} y={8} width={2.8} height={7.5} fill="#f0f0f0" /><rect x={8.6} y={4} width={2.8} height={2.6} fill="#f0f0f0" /></svg>
      <span className="inline-block scale-y-[1.14] tracking-[-0.3px]">No Messages</span>
    </div>
    <div className="mx-[7px]"><Sep /></div>
    <div className="flex h-[26px] w-[1382px] items-center border-t border-t-[#a8a8a8] border-l border-l-[#a8a8a8] pl-[2px] text-[#111]">
      <span className="inline-block scale-y-[1.14] tracking-[-0.35px]">Loading design 'AddSubMulDiv'.</span>
    </div>
    <div className="ml-[8px]"><Sep /></div>
    <div className="ml-[5px] flex h-[26px] w-[156px] items-center border-t border-t-[#a8a8a8] border-l border-l-[#a8a8a8] text-[#222]">
      <span className="ml-[10px] inline-block w-[82px] scale-y-[1.14] tracking-[-0.2px]">+2600.0</span>
      <span className="inline-block w-[47px] scale-y-[1.14] tracking-[-0.2px]">+0.0</span>
      <span className="inline-block scale-y-[1.14] text-[#2020b0]">th</span>
    </div>
  </div>
);

// ---------- taskbar ----------
const IsisMark = () => (
  <div className="flex h-[16px] w-[20px] items-center justify-center bg-[#1414e0] font-['Liberation_Sans',sans-serif] text-[11px] leading-none font-bold tracking-[-0.5px] text-white">ISIS</div>
);
const Task = ({ children, bar, bg }: { children: React.ReactNode; bar?: string; bg?: string }) => (
  <div className={`relative flex h-full w-[46px] shrink-0 items-center justify-center ${bg ?? ''}`}>
    {children}
    {bar && <div className={`absolute bottom-0 left-0 h-[3px] w-full ${bar}`} />}
  </div>
);
const W = ({ children }: { children: React.ReactNode }) => <svg viewBox="0 0 24 24" className="h-6 w-6">{children}</svg>;

const Taskbar = () => (
  <div className="flex h-[38px] items-center bg-[linear-gradient(90deg,#13222a,#1b2c36_25%,#232327_60%,#2c1f1f)] font-['Liberation_Sans',sans-serif] text-white">
    <div className="-ml-[1px] flex h-full">
      <Task><W><path d="M2 5l8-1.2V11.5H2zM11 3.6L22 2v9.5H11zM2 12.5h8v7.7L2 19zM11 12.5h11V22l-11-1.6z" fill="#fff" /></W></Task>
      <Task><W><circle cx={14} cy={9} r={6.5} fill="none" stroke="#fff" strokeWidth={1.5} /><path d="M9.5 14L3 21.5" stroke="#fff" strokeWidth={1.6} /></W></Task>
      <Task><W><circle cx={12} cy={12} r={8} fill="none" stroke="#fff" strokeWidth={2.6} /></W></Task>
      <Task><W><path d="M3 3h12M3 21h12M3 8h12v8H3zM19 3v6M19 11v2M19 15v6" fill="none" stroke="#fff" strokeWidth={1.5} /></W></Task>
      <Task bar="bg-[#8cc4ea]"><W><path d="M3 5h7l2 3h9v5H3z" fill="#f4c430" /><path d="M3 11h18v10H3z" fill="#f8d85a" /><path d="M8 15h8v6h-2v-4h-4v4H8z" fill="#2a8fd8" /></W></Task>
      <Task><W><path d="M3 13C3 6 8 3 13 3c5 0 9 4 8 11H9c0 5 7 6 11 3v4c-6 3-15 1-15-6 0-3 1-5 3-6-2 1-4 2-5 4zM9 10h7c0-4-6-4-7 0z" fill="#1f80e8" /></W></Task>
      <Task bar="bg-[#8cc4ea]"><W><circle cx={12} cy={12} r={10} fill="#3aa757" /><path d="M12 2a10 10 0 0 1 8.7 5H12a5 5 0 0 0-4.5 3L3.6 6.6A10 10 0 0 1 12 2z" fill="#e94335" /><path d="M20.7 7A10 10 0 0 1 12 22l4.3-7.5A5 5 0 0 0 16.5 9z" fill="#fbbc04" /><circle cx={12} cy={12} r={4.8} fill="#fff" /><circle cx={12} cy={12} r={3.7} fill="#4285f4" /></W></Task>
      <Task><W><circle cx={12} cy={13} r={10} fill="#f2762e" /><path d="M12 3c2 3 6 4 8 8 0-4-2-8-8-9z" fill="#ffcb3d" /><circle cx={12} cy={13} r={5.5} fill="#6e3bb8" /><path d="M4 9c0 6 4 12 12 11-5 3-13 0-13-7z" fill="#e0245e" /></W></Task>
      <Task><W><path d="M3 8h18l1 15H2z" fill="#fff" /><path d="M8 8c0-8 8-8 8 0" fill="none" stroke="#fff" strokeWidth={1.6} /><rect x={7} y={11} width={4.5} height={4.5} fill="#f25022" /><rect x={12.5} y={11} width={4.5} height={4.5} fill="#7fba00" /><rect x={7} y={16.5} width={4.5} height={4.5} fill="#00a4ef" /><rect x={12.5} y={16.5} width={4.5} height={4.5} fill="#ffb900" /></W></Task>
      <Task><W><path d="M2 10l10-7 10 7v10H2z" fill="#fff" /><path d="M2 10l10 6 10-6" fill="none" stroke="#1d2a30" strokeWidth={1.6} /></W></Task>
      <Task><span className="text-[19px] leading-none font-light text-[#e8e8e8]">T<span className="text-[13px]">h</span></span></Task>
      <Task><W><circle cx={12} cy={12} r={10} fill="#c62a1e" /><circle cx={12} cy={12} r={5.5} fill="none" stroke="#f0c0b8" strokeWidth={1.4} /></W></Task>
      <Task><W><circle cx={12} cy={12} r={10} fill="#1b3f66" /><circle cx={15.5} cy={9.5} r={3.4} fill="none" stroke="#fff" strokeWidth={1.4} /><path d="M3 13l6 3 4-4" fill="none" stroke="#fff" strokeWidth={1.8} /><circle cx={9} cy={16} r={2.3} fill="#fff" /></W></Task>
      <Task><W><path d="M17 2l5 2.5v15L17 22 8 13.5l-4.5 3.5L2 16V8l1.5-1L8 10.500zM17 7.500l-5.500 4.500 5.500 4.500z" fill="#6f4bc4" fillRule="evenodd" /></W></Task>
      <Task bar="bg-[#e8741f]" bg="bg-[#a85a2a]"><W><circle cx={12} cy={12} r={10} fill="#2fa6da" /><path d="M5 12l13-5-2 11-4-3-2 2-1-4z" fill="#fff" /></W></Task>
      <Task bar="bg-[#8cc4ea]" bg="bg-[#4c4c58]"><IsisMark /></Task>
    </div>
    <div className="flex-1" />
    <svg viewBox="0 0 24 24" className="mr-[1px] h-[20px] w-[20px]"><path d="M3 16l9-9 9 9" fill="none" stroke="#fff" strokeWidth={1.5} /></svg>
    <svg viewBox="0 0 24 24" className="ml-[7px] h-6 w-6"><path d="M3 7h17v11H3zM21.500 10v5" fill="none" stroke="#fff" strokeWidth={1.5} /><rect x={5} y={9} width={6} height={7} fill="#fff" /></svg>
    <svg viewBox="0 0 24 24" className="ml-[6px] h-6 w-6"><g fill="none" stroke="#fff" strokeWidth={1.2}><circle cx={12} cy={12} r={10} /><ellipse cx={12} cy={12} rx={4.5} ry={10} /><path d="M2 12h20M4 6.500h16M4 17.500h16" /></g></svg>
    <svg viewBox="0 0 24 24" className="ml-[6px] h-6 w-6"><path d="M3 9h4l5-5v16l-5-5H3z" fill="none" stroke="#fff" strokeWidth={1.3} /><path d="M15 9c1.500 2 1.500 4 0 6M18 6c3 4 3 8 0 12" fill="none" stroke="#ddd" strokeWidth={1.3} /></svg>
    <span className="ml-[13px] inline-block scale-y-[1.14] text-[14px] text-[#f0f0f0]">ENG</span>
    <span className="ml-[17px] inline-block scale-y-[1.14] text-[14px] tracking-[-0.1px] text-[#f0f0f0]">11:24 PM</span>
    <svg viewBox="0 0 24 24" className="mr-[29px] ml-[22px] h-6 w-6"><path d="M2 3h20v16h-7l-3 3-3-3H2z" fill="none" stroke="#fff" strokeWidth={1.4} /></svg>
  </div>
);

const menus = [
  ['File', 'w-[40px]'], ['View', 'w-[49px]'], ['Edit', 'w-[43px]'], ['Tools', 'w-[51px]'],
  ['Design', 'w-[62px]'], ['Graph', 'w-[57px]'], ['Source', 'w-[63px]'], ['Debug', 'w-[61px]'],
  ['Library', 'w-[63px]'], ['Template', 'w-[77px]'], ['System', 'w-[65px]'], ['Help', 'w-[40px]'],
];

export default function App() {
  return (
    <div className="flex h-[1080px] w-[1920px] flex-col overflow-hidden bg-[#f0f0f0] font-['Open_Sans',sans-serif]">
      <div className="flex h-[27px] items-center bg-white text-[14.500px] text-[#111]">
        <div className="mr-[5px] ml-[2px] flex h-[16px] w-[20px] items-center justify-center bg-[#1414e0] font-['Liberation_Sans',sans-serif] text-[11px] leading-none font-bold tracking-[-0.5px] text-white">ISIS</div>
        <span className="tracking-[-0.05px]">AddSubMulDiv - ISIS Professional</span>
        <div className="flex-1" />
        <svg viewBox="0 0 12 12" className="mr-[46px] h-[12px] w-[12px]"><path d="M0 6h12" stroke="#111" strokeWidth={1} /></svg>
        <svg viewBox="0 0 14 14" className="mr-[45px] h-[14px] w-[14px]"><path d="M1.500 3.500h9v9h-9zM3.500 3.500v-2h9v9h-2" fill="none" stroke="#111" /></svg>
        <svg viewBox="0 0 14 14" className="mr-[25px] h-[14px] w-[14px]"><path d="M1 1l12 12M13 1L1 13" stroke="#111" /></svg>
      </div>
      <div className="flex h-[27px] items-center bg-white pl-[9px] text-[14px] tracking-[-0.2px] text-[#111]">
        {menus.map(([m, w]) => <div key={m} className={w}>{m}</div>)}
      </div>
      <Toolbar />
      <div className="flex h-[915px]">
        <div className="flex w-[194px] shrink-0">
          <LeftStrip />
          <DevicePanel />
        </div>
        <div className="h-[914px] w-[1721px] overflow-hidden border-t-2 border-l-2 border-t-[#808080] border-l-[#808080] bg-[#dfdfcf] bg-[linear-gradient(to_right,#bdbdaa_2px,transparent_2px),linear-gradient(to_bottom,#bdbdaa_2px,transparent_2px),linear-gradient(to_right,#cdcdbc_1.5px,transparent_1.5px),linear-gradient(to_bottom,#cdcdbc_1.5px,transparent_1.5px)] bg-[size:126.4px_126.4px,126.4px_126.4px,12.64px_12.64px,12.64px_12.64px] bg-[position:100px_0,0_76.6px,11.5px_0,0_0.8px]">
          <Schematic />
        </div>
      </div>
      <StatusBar />
      <Taskbar />
    </div>
  );
}
